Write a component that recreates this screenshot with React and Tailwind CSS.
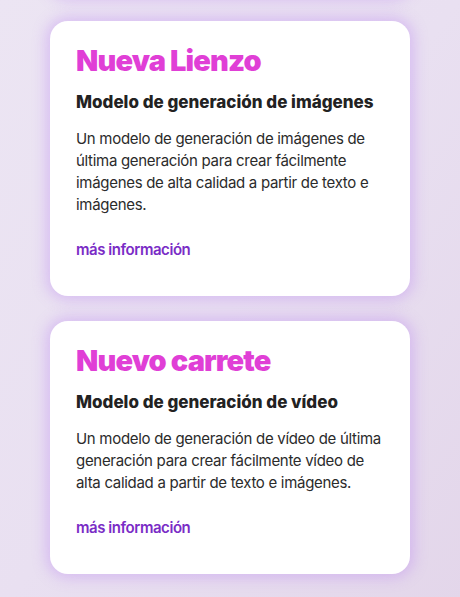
const cards = [
  {
    title: "Nueva Lienzo",
    subtitle: "Modelo de generación de imágenes",
    body: "Un modelo de generación de imágenes de última generación para crear fácilmente imágenes de alta calidad a partir de texto e imágenes.",
  },
  {
    title: "Nuevo carrete",
    subtitle: "Modelo de generación de vídeo",
    body: "Un modelo de generación de vídeo de última generación para crear fácilmente vídeo de alta calidad a partir de texto e imágenes.",
  },
];

function Card({ title, subtitle, body }) {
  return (
    <div className="w-[360px] rounded-[18px] bg-white pl-[26px] pr-[22px] pt-[22px] pb-[35px] shadow-[0_0_14px_4px_rgba(180,120,240,0.35)]">
      <h2 className="text-[29px] leading-[36px] font-black tracking-[-0.03em] text-[#e03fd6]">{title}</h2>
      <h3 className="mt-[11px] text-[17px] leading-[24px] font-extrabold text-[#222222]">{subtitle}</h3>
      <p className="mt-[14px] text-[15px] leading-[22px] tracking-[-0.02em] text-[#2b2b2b]">{body}</p>
      <a className="mt-[23px] block text-[15px] leading-[22px] font-semibold tracking-[-0.03em] text-[#7a2cc6]">más información</a>
    </div>
  );
}

export default function App() {
  return (
    <div
      className="min-h-[597px] w-full overflow-hidden bg-gradient-to-br from-[#ece5f3] via-[#e9e0f1] to-[#e3d6ea] pt-[21px] pb-10"
      style={{ fontFamily: "Inter, 'Noto Sans', sans-serif" }}
    >
      <div className="flex flex-col items-center gap-[25px]">
        <div className="-mt-[230px] h-[205px] w-[360px] rounded-[18px] bg-white shadow-[0_0_14px_4px_rgba(180,120,240,0.35)]" />
        {cards.map((c) => (
          <Card key={c.title} {...c} />
        ))}
      </div>
    </div>
  );
}
